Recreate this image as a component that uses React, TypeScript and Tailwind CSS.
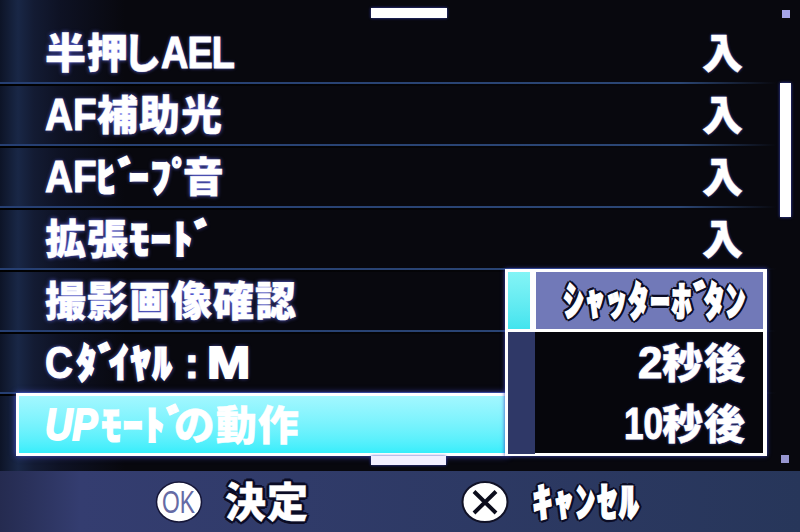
import React from "react";

const KANA = "font-['Noto_Sans_CJK_JP',sans-serif] font-black text-[41px] leading-[56px]";
const LATIN = "inline-block origin-left whitespace-nowrap font-['Liberation_Sans','Noto_Sans_CJK_JP',sans-serif] text-[44px] leading-[60px]";

function isHalfWidth(ch: string) {
  return ch >= "｡" && ch <= "ﾟ";
}

function Kana({ children, className = "" }: { children: string; className?: string }) {
  return (
    <span className={`${KANA} flex h-[62px] shrink-0 ${className}`}>
      {Array.from(children).map((ch, i) => (
        <span
          key={i}
          className={
            ch === "ﾞ" || ch === "ﾟ"
              ? "w-[11px] shrink-0 [-webkit-text-stroke:1.2px_white]"
              : isHalfWidth(ch)
                ? "w-[21.6px] shrink-0 [-webkit-text-stroke:1.2px_white]"
                : "w-[42px] shrink-0 [-webkit-text-stroke:0.4px_white]"
          }
        >
          {ch}
        </span>
      ))}
    </span>
  );
}

function Latin({ children, className }: { children: string; className: string }) {
  return (
    <span className={`${LATIN} shrink-0 ${className}`}>{children}</span>
  );
}

function Row({ children, value }: { children: React.ReactNode; value?: string }) {
  return (
    <div className="flex h-[62px] shrink-0 flex-col">
      <div className="flex h-[58px] items-center justify-between pl-[45px] pr-[56px]">
        <div className="flex items-center [text-shadow:0_0_4px_#6a70ff]">{children}</div>
        {value && <Kana className="[text-shadow:0_0_3px_#5560e0]">{value}</Kana>}
      </div>
      <div className="h-[2px] bg-linear-to-r from-[#263f72] via-[#2b4674] via-85% to-transparent to-97%" />
      <div className="h-[2px] bg-linear-to-r from-black to-transparent" />
    </div>
  );
}

const OUTLINE =
  "[text-shadow:3px_0_0_#0b0c25,-3px_0_0_#0b0c25,0_3px_0_#0b0c25,0_-3px_0_#0b0c25,2px_2px_0_#0b0c25,-2px_-2px_0_#0b0c25,2px_-2px_0_#0b0c25,-2px_2px_0_#0b0c25]";

export default function App() {
  return (
    <div className="relative flex h-[532px] w-[800px] flex-col overflow-hidden bg-[#08080e] text-white">
      <div className="flex h-[471px] shrink-0 flex-col bg-[linear-gradient(to_right,#0d1427_0px,#192746_18px,#131b33_34px,#0e1224_60px,#08080e_125px)] pt-[24px]">
        <Row value="入">
          <Kana>半押</Kana>
          <Kana className="-ml-[6px] w-[38px] origin-left scale-x-[0.93]">し</Kana>
          <Latin className="w-[78px] scale-x-[0.86] font-bold tracking-[-1px] [-webkit-text-stroke:1px_white]">AEL</Latin>
        </Row>
        <Row value="入">
          <Latin className="w-[52px] scale-x-[0.88] font-bold [-webkit-text-stroke:1px_white]">AF</Latin>
          <Kana>補助光</Kana>
        </Row>
        <Row value="入">
          <Latin className="w-[51px] scale-x-[0.88] font-bold [-webkit-text-stroke:1px_white]">AF</Latin>
          <Kana>ﾋﾞｰﾌﾟ音</Kana>
        </Row>
        <Row value="入">
          <Kana>拡張ﾓｰﾄﾞ</Kana>
        </Row>
        <Row>
          <Kana>撮影画像確認</Kana>
        </Row>
        <Row>
          <Latin className="w-[31px] scale-x-[0.88] font-bold [-webkit-text-stroke:1px_white]">C</Latin>
          <Kana>ﾀﾞｲﾔﾙ</Kana>
          <Latin className="ml-[11px] w-[23px] font-bold [-webkit-text-stroke:1px_white]">:</Latin>
          <Latin className="w-[44px] scale-x-[1.18] font-bold [-webkit-text-stroke:2px_white]">M</Latin>
        </Row>
        <div className="-mt-[3px] ml-[16px] flex h-[63px] w-[492px] shrink-0 items-center border-[3px] border-white bg-linear-to-b from-[#a2f7ff] to-[#36eefb] pl-[26px] shadow-[0_0_6px_#4450d0]">
          <Latin className="w-[56px] scale-x-[0.86] font-bold italic [-webkit-text-stroke:2px_white]">UP</Latin>
          <Kana>ﾓｰﾄﾞ</Kana>
          <Kana className="-ml-[3px]">の動作</Kana>
        </div>
      </div>

      <div className="flex h-[61px] shrink-0 items-center bg-linear-to-r from-[#252b50] via-[#343d70] via-10% to-[#27365a]">
        <svg className="ml-[155px] h-[44px] w-[48px] shrink-0" viewBox="0 0 48 44">
          <ellipse cx="24" cy="22" rx="22.5" ry="20" fill="white" stroke="#151638" strokeWidth="1.5" />
          <text x="7" y="33" textLength="33" lengthAdjust="spacingAndGlyphs" fontFamily="Liberation Sans" fontSize="31" fill="#656ba5">
            OK
          </text>
        </svg>
        <Kana className={`ml-[22px] w-[84px] ${OUTLINE}`}>決定</Kana>
        <svg className="ml-[152px] h-[44px] w-[48px] shrink-0" viewBox="0 0 48 44">
          <ellipse cx="24" cy="22" rx="22.5" ry="20" fill="white" stroke="#101126" strokeWidth="2" />
          <path d="M13 11.5 35 33M35 11.5 13 33" stroke="#0c0d1c" strokeWidth="4" />
        </svg>
        <Kana className={`ml-[23px] ${OUTLINE}`}>ｷｬﾝｾﾙ</Kana>
      </div>

      <div className="absolute left-[371px] top-[8px] h-[10px] w-[76px] bg-white shadow-[0_0_3px_#3a46c0]" />
      <div className="absolute left-[371px] top-[456px] h-[9px] w-[75px] bg-[#f2efff] shadow-[0_0_3px_#3a46c0]" />
      <div className="absolute left-[782px] top-[10px] size-[8px] bg-[#a5a4e8]" />
      <div className="absolute left-[780px] top-[83px] h-[134px] w-[11px] bg-white shadow-[0_0_3px_#3a46c0]" />
      <div className="absolute left-[781px] top-[455px] size-[8px] bg-[#9796d0]" />

      <div className="absolute left-[505px] top-[269px] flex h-[187px] w-[262px] flex-col border-[3px] border-r-4 border-white bg-[#06060c] shadow-[0_0_4px_#3a46c0]">
        <div className="flex h-[60px] shrink-0 border-b-[3px] border-white">
          <div className="w-[22px] bg-linear-to-b from-[#83f4f6] to-[#42e4ee]" />
          <div className="w-[6px] bg-white" />
          <div className="flex flex-1 items-center justify-end bg-[#7179b8] pr-[16px]">
            <Kana className={OUTLINE}>ｼｬｯﾀｰﾎﾞﾀﾝ</Kana>
          </div>
        </div>
        <div className="flex flex-1">
          <div className="w-[27px] bg-[#2f3867]" />
          <div className="flex flex-1 flex-col pr-[17px] [text-shadow:0_0_3px_#5560e0]">
            <div className="flex h-[61px] items-center justify-end">
              <Latin className="w-[24px] font-bold [-webkit-text-stroke:1px_white]">2</Latin>
              <Kana>秒後</Kana>
            </div>
            <div className="flex h-[61px] items-center justify-end">
              <Latin className="w-[38px] scale-x-[0.8] font-bold [-webkit-text-stroke:1px_white]">10</Latin>
              <Kana>秒後</Kana>
            </div>
          </div>
        </div>
      </div>
    </div>
  );
}
